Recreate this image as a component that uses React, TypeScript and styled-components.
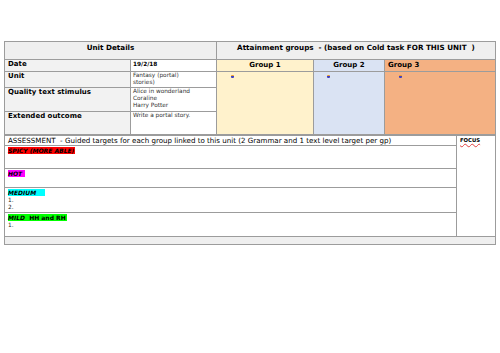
import styled, { createGlobalStyle } from "styled-components";

const Global = createGlobalStyle`
  html, body { margin: 0; padding: 0; background: #ffffff; }
  body { font-family: "DejaVu Sans", "Liberation Sans", sans-serif; color: #000; }
`;

const Page = styled.div`
  width: 500px;
  height: 353px;
  padding: 41px 0 0 4px;
  box-sizing: border-box;
`;

const Sheet = styled.table`
  width: 491px;
  border-collapse: collapse;
  table-layout: fixed;
  border: 1px solid #9c9c9c;
  td {
    border: 1px solid #9c9c9c;
    padding: 0 3px;
    vertical-align: top;
    overflow: hidden;
  }
`;

const Row = styled.tr<{ $h: number }>`
  height: ${(p) => p.$h}px;
`;

const HeadCell = styled.td<{ $align?: string }>`
  background: #efefef;
  font-weight: bold;
  font-size: 7.2px;
  line-height: 9px;
  padding-top: 1px !important;
  text-align: ${(p) => p.$align || "center"};
  white-space: pre;
`;

const LabelCell = styled.td`
  background: #f2f2f2;
  font-weight: bold;
  font-size: 7px;
  line-height: 9px;
`;

const ValueCell = styled.td`
  background: #fff;
  font-size: 5.8px;
  line-height: 7px;
  color: #333;
  padding-left: 2px !important;
`;

const DateValue = styled(ValueCell)`
  font-weight: bold;
  color: #000;
  padding-top: 1px !important;
`;

const GroupCell = styled.td<{ $bg: string; $align?: string }>`
  background: ${(p) => p.$bg};
  font-weight: bold;
  font-size: 7px;
  line-height: 10px;
  text-align: ${(p) => p.$align || "center"};
`;

const GroupBody = styled.td<{ $bg: string; $pad: number }>`
  background: ${(p) => p.$bg};
  padding-left: ${(p) => p.$pad}px !important;
  padding-top: 3px !important;
`;

const Marker = styled.span`
  display: block;
  width: 3px;
  height: 3px;
  border-radius: 1px;
  background: linear-gradient(#f0a020 0 40%, #4040c0 40% 100%);
`;

const AssessCell = styled.td`
  font-size: 7.1px;
  line-height: 9px;
  white-space: pre;
`;

const TargetCell = styled.td`
  font-size: 5.8px;
  line-height: 6.5px;
  padding-top: 1px !important;
  color: #222;
`;

const Tag = styled.span<{ $bg: string }>`
  display: inline-block;
  background: ${(p) => p.$bg};
  color: #000;
  font-weight: bold;
  font-style: italic;
  font-size: 6px;
  line-height: 7px;
  padding-right: 1px;
  white-space: pre;
  margin-bottom: 1px;
`;

const Plain = styled.span`
  font-style: normal;
`;

const FocusCell = styled.td`
  font-size: 5.3px;
  font-weight: bold;
  padding-top: 1px !important;
`;

const Focus = styled.span`
  text-decoration: underline wavy #e04040;
  text-decoration-thickness: 0.5px;
`;

const Footer = styled.td`
  background: #efefef;
`;

const BottomSheet = styled(Sheet)`
  border-top: none;
`;

export default function App() {
  return (
    <Page>
      <Global />
      <Sheet>
        <colgroup>
          <col style={{ width: 126 }} />
          <col style={{ width: 86 }} />
          <col style={{ width: 97 }} />
          <col style={{ width: 71 }} />
          <col style={{ width: 111 }} />
        </colgroup>
        <tbody>
          <Row $h={18}>
            <HeadCell colSpan={2}>Unit Details</HeadCell>
            <HeadCell colSpan={3}>Attainment groups  - (based on Cold task FOR THIS UNIT  )</HeadCell>
          </Row>
          <Row $h={12}>
            <LabelCell>Date</LabelCell>
            <DateValue>19/2/18</DateValue>
            <GroupCell $bg="#fff2cc">Group 1</GroupCell>
            <GroupCell $bg="#dae3f3">Group 2</GroupCell>
            <GroupCell $bg="#f4b183" $align="left">Group 3</GroupCell>
          </Row>
          <Row $h={16}>
            <LabelCell>Unit</LabelCell>
            <ValueCell>
              Fantasy (portal)
              <br />
              stories)
            </ValueCell>
            <GroupBody $bg="#fff2cc" $pad={14} rowSpan={3}>
              <Marker />
            </GroupBody>
            <GroupBody $bg="#dae3f3" $pad={13} rowSpan={3}>
              <Marker />
            </GroupBody>
            <GroupBody $bg="#f4b183" $pad={14} rowSpan={3}>
              <Marker />
            </GroupBody>
          </Row>
          <Row $h={24}>
            <LabelCell>Quality text stimulus</LabelCell>
            <ValueCell>
              Alice in wonderland
              <br />
              Coraline
              <br />
              Harry Potter
            </ValueCell>
          </Row>
          <Row $h={23}>
            <LabelCell>Extended outcome</LabelCell>
            <ValueCell>Write a portal story.</ValueCell>
          </Row>
        </tbody>
      </Sheet>
      <BottomSheet>
        <colgroup>
          <col style={{ width: 452 }} />
          <col style={{ width: 39 }} />
        </colgroup>
        <tbody>
          <Row $h={10}>
            <AssessCell>
              ASSESSMENT  - Guided targets for each group linked to this unit (2 Grammar and 1 text level target per gp)
            </AssessCell>
            <FocusCell rowSpan={5}>
              <Focus>FOCUS</Focus>
            </FocusCell>
          </Row>
          <Row $h={23}>
            <TargetCell>
              <Tag $bg="#ff0000">SPICY (MORE ABLE)</Tag>
            </TargetCell>
          </Row>
          <Row $h={19}>
            <TargetCell>
              <Tag $bg="#ff00ff">HOT </Tag>
            </TargetCell>
          </Row>
          <Row $h={25}>
            <TargetCell>
              <Tag $bg="#00ffff">MEDIUM    </Tag>
              <br />
              1.
              <br />
              2.
            </TargetCell>
          </Row>
          <Row $h={24}>
            <TargetCell>
              <Tag $bg="#00ff00">
                MILD  <Plain>HH and RH</Plain>
              </Tag>
              <br />
              1.
            </TargetCell>
          </Row>
          <Row $h={8}>
            <Footer colSpan={2} />
          </Row>
        </tbody>
      </BottomSheet>
    </Page>
  );
}
